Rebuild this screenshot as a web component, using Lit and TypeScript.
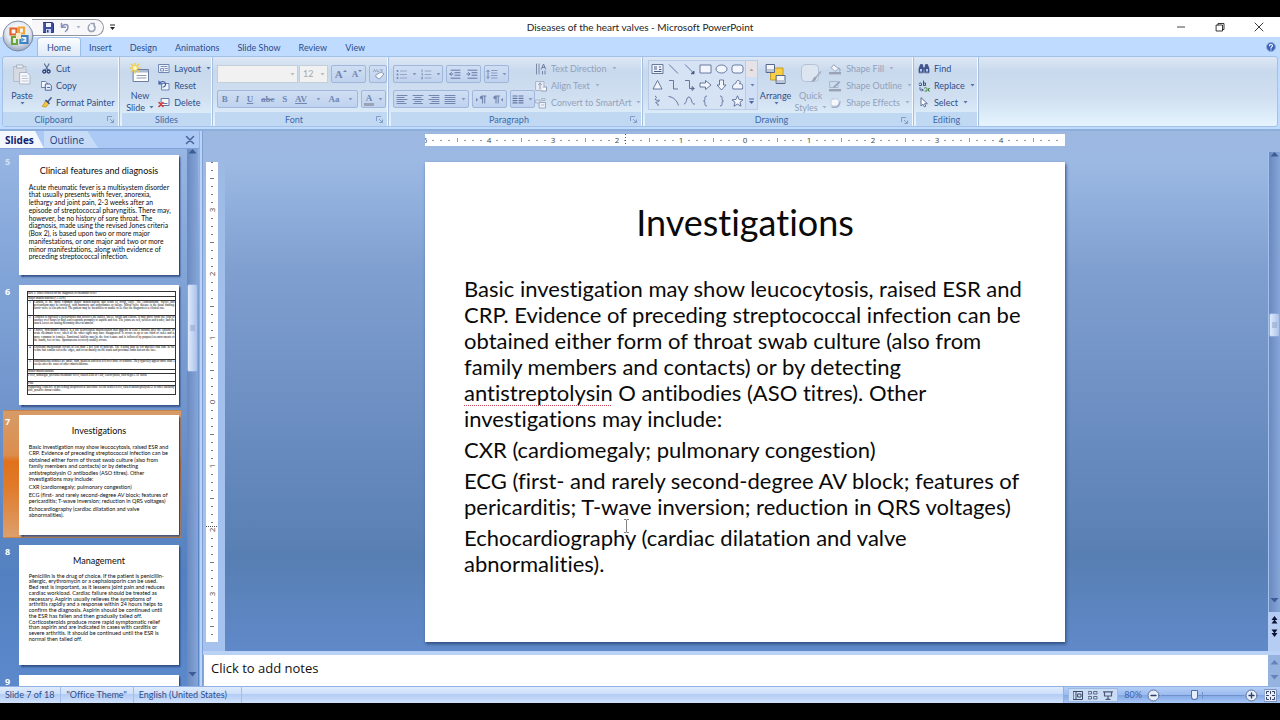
import { LitElement, html, css, svg, nothing } from "lit";
import { customElement, property } from "lit/decorators.js";
import { classMap } from "lit/directives/class-map.js";

interface SlideData {
  num: number;
  title?: string;
  size?: "normal" | "large" | "small";
  paras?: string[][];
  table?: boolean;
}

const SLIDES: SlideData[] = [
  {
    num: 5,
    title: "Clinical features and diagnosis",
    size: "large",
    paras: [[
      "Acute rheumatic fever is a multisystem disorder",
      "that usually presents with fever, anorexia,",
      "lethargy and joint pain, 2-3 weeks after an",
      "episode of streptococcal pharyngitis. There may,",
      "however, be no history of sore throat. The",
      "diagnosis, made using the revised Jones criteria",
      "(Box 2), is based upon two or more major",
      "manifestations, or one major and two or more",
      "minor manifestations, along with evidence of",
      "preceding streptococcal infection.",
    ]],
  },
  { num: 6, table: true },
  {
    num: 7,
    title: "Investigations",
    size: "normal",
    paras: [
      [
        "Basic investigation may show leucocytosis, raised ESR and",
        "CRP. Evidence of preceding streptococcal infection can be",
        "obtained either form of throat swab culture (also from",
        "family members and contacts) or by detecting",
        "antistreptolysin O antibodies (ASO titres). Other",
        "investigations may include:",
      ],
      ["CXR (cardiomegaly; pulmonary congestion)"],
      [
        "ECG (first- and rarely second-degree AV block; features of",
        "pericarditis; T-wave inversion; reduction in QRS voltages)",
      ],
      ["Echocardiography (cardiac dilatation and valve", "abnormalities)."],
    ],
  },
  {
    num: 8,
    title: "Management",
    size: "small",
    paras: [[
      "Penicillin is the drug of choice. If the patient is penicillin-",
      "allergic, erythromycin or a cephalosporin can be used.",
      "Bed rest is important, as it lessens joint pain and reduces",
      "cardiac workload. Cardiac failure should be treated as",
      "necessary. Aspirin usually relieves the symptoms of",
      "arthritis rapidly and a response within 24 hours helps to",
      "confirm the diagnosis. Aspirin should be continued until",
      "the ESR has fallen and then gradually tailed off.",
      "Corticosteroids produce more rapid symptomatic relief",
      "than aspirin and are indicated in cases with carditis or",
      "severe arthritis. It should be continued until the ESR is",
      "normal then tailed off.",
    ]],
  },
  { num: 9 },
];

const CRITERIA: { n?: number; h: number; text: string }[] = [
  { h: 15, text: "Box 2: Jones criteria for the diagnosis of rheumatic fever" },
  { h: 15, text: "Major manifestations (CCEPS)" },
  { n: 1, h: 60, text: "Carditis is the most common major manifestation and tends to occur early. The endocardium, valves and pericardium may be involved, with murmurs and arrhythmias or failure. Mitral valve disease is the usual finding; aortic valve is less affected. The patient may be breathless or unable to lie flat; the diagnosis is a clinical one." },
  { n: 2, h: 53, text: "Arthritis is typically a polyarthritis that involves the ankles, knees, wrists and elbows. It may move from one joint to another over hours or days and responds promptly to aspirin and rest. The joints are red, swollen and tender, and the attack leaves no lasting deformity after treatment." },
  { n: 3, h: 68, text: "Chorea, Sydenham's chorea, is a late neurological manifestation that appears at least 3 months after the episode of acute rheumatic fever, when all the other signs may have disappeared. It occurs in up to one third of cases and is more common in females. Emotional lability may be the first feature and is followed by purposeless movements of the hands, feet or face. Spontaneous recovery usually occurs." },
  { n: 4, h: 55, text: "Erythema marginatum occurs in less than 5 per cent of patients. The lesions start as red macules that fade in the centre but remain red at the edges, and occur mainly on the trunk and proximal limbs but not the face." },
  { n: 5, h: 40, text: "Subcutaneous nodules are small, firm, painless and best felt over bone or tendons. They typically appear more than 3 weeks after the onset of other manifestations." },
  { h: 15, text: "Minor manifestations" },
  { h: 30, text: "Fever, arthralgia, previous rheumatic fever, raised ESR or CRP, leucocytosis, first-degree AV block" },
  { h: 15, text: "Plus" },
  { h: 35, text: "Supporting evidence of preceding streptococcal infection: recent scarlet fever, raised antistreptolysin O or other antibody titre, positive throat culture." },
];

@customElement("ppt-slide")
class PptSlide extends LitElement {
  @property({ attribute: false }) slide!: SlideData;
  @property({ type: Boolean }) proofing = false;

  static styles = css`
    :host { display: block; width: 640px; height: 480px; box-sizing: border-box; background: #fff; color: #0a0a0a; font-family: Lato, "Open Sans", sans-serif; font-variant-ligatures: none; overflow: hidden; padding: 38px 39px 0; }
    :host([table]) { padding: 25px 12px 0 30px; }
    h2 { margin: 0 0 32px; font-size: 36px; line-height: 44px; font-weight: 400; text-align: center; }
    p { margin: 0 0 5px; font-size: 22px; line-height: 26px; white-space: nowrap; }
    .large { font-size: 27px; line-height: 31px; }
    .small { line-height: 23px; }
    .typo { text-decoration: underline dotted #c8485c 1px; text-underline-offset: 4px; text-decoration-skip-ink: none; }
    table { width: 100%; border-collapse: collapse; font: 12px/13px "Liberation Serif", serif; }
    td { border: 3px solid #333; padding: 0 2px; vertical-align: top; text-align: justify; color: #000; box-sizing: border-box; }
    .n { width: 24px; text-align: center; }
  `;

  line(t: string) {
    const w = "antistreptolysin";
    return this.proofing && t.startsWith(w) ? html`<span class="typo">${w}</span>${t.slice(w.length)}` : t;
  }

  render() {
    const s = this.slide;
    if (s.table) {
      return html`<table><tbody>${CRITERIA.map((r) => html`<tr style="height:${r.h}px">
        ${r.n ? html`<td class="n">${r.n}</td><td>${r.text}</td>` : html`<td colspan="2">${r.text}</td>`}</tr>`)}</tbody></table>`;
    }
    if (!s.title) return nothing;
    return html`<h2>${s.title}</h2>${s.paras!.map((p) => html`<p class=${s.size!}>${p.map((l, i) => html`${i ? html`<br>` : nothing}${this.line(l)}`)}</p>`)}`;
  }
}

const ic = (w: number, h: number, body: unknown) =>
  html`<svg width=${w} height=${h} viewBox="0 0 ${w} ${h}" fill="none" stroke-linecap="round" stroke-linejoin="round" aria-hidden="true">${body}</svg>`;

const I = {
  save: ic(11, 11, svg`<path d="M.5.5h9l1 1v9H.5z" fill="#3c4fa0" stroke="#2b3a80"/><path d="M3 1h5v4H3z" fill="#f4f6ff"/><path d="M3 7h5v4H3z" fill="#cfd6f4"/><path d="M4 8h1.500v2.500H4z" fill="#2b3a80"/>`),
  undo: ic(11, 11, svg`<path d="M2.500 1.500v3.800h3.800M2.800 5C4.500 1.500 9 1.500 9 5c0 2-1 3.500-2.500 4.500" stroke="#8791b8" stroke-width="1.500"/>`),
  redo: ic(11, 11, svg`<path d="M3.500 2.800C1 5 2 9.500 5.500 9.500S10 5.500 8 3M5 1.500h3.200v3" stroke="#9aa0b4" stroke-width="1.500"/>`),
  orb: ic(32, 32, svg`<defs><radialGradient id="o" cx=".5" cy=".35" r=".65"><stop offset="0" stop-color="#fff"/><stop offset=".6" stop-color="#e3e8f0"/><stop offset="1" stop-color="#93a2bd"/></radialGradient></defs>
    <circle cx="16" cy="16" r="15" fill="url(#o)" stroke="#7d8ba5"/>
    <g stroke-width="2.200" stroke-linejoin="miter"><path d="M8.500 8.500h6v6h-6z" stroke="#e2632a"/><path d="M17 7.500h5v6h-5z" stroke="#f0a43a"/><path d="M10 17h5v7h-5z" stroke="#6aa53c"/><path d="M18.500 16h7v7h-7z" stroke="#3f7fc4"/></g><path d="M14 13h5v6h-5z" fill="#f6e9c8"/><path d="M20 18l3 1.500-3 2z" fill="#4a9ad0"/>`),
  paste: ic(20, 22, svg`<path d="M2 3.500h12v15H2z" fill="#d5dae3" stroke="#b3bccb"/><path d="M5 2h6v3H5z" fill="#eceff4" stroke="#a7b0c0"/><path d="M8 9.500h7l3 3v8.500H8z" fill="#f6f8fb" stroke="#aab5c6"/><path d="M10 13h5M10 15.500h6M10 18h6" stroke="#bcc6d6"/>`),
  cut: ic(11, 11, svg`<path d="M3.500 1l3.500 6M8 1L4.500 7" stroke="#5a6f96" stroke-width="1.200"/><circle cx="3.300" cy="8.500" r="1.500" stroke="#26407c" stroke-width="1.300"/><circle cx="7.600" cy="8.500" r="1.500" stroke="#26407c" stroke-width="1.300"/>`),
  copy: ic(11, 11, svg`<path d="M.7 1.500h4l1.500 1.500v4.500H.7z" fill="#f4f8ff" stroke="#6a7fae"/><path d="M4.700 4h4l1.600 1.500v4.700H4.700z" fill="#e7effc" stroke="#4c649c"/><path d="M6.500 7.500h2" stroke="#4c649c"/>`),
  painter: ic(11, 11, svg`<path d="M10 1L6.500 5" stroke="#51648f" stroke-width="1.800"/><path d="M4.500 3.500l3.500 3-3 3.500c-1 0-2.500 0-4-1 2-1 2.500-3 3.500-5.500z" fill="#f5c542" stroke="#b58a22" stroke-width=".7"/><path d="M5 3.500l3 2.800" stroke="#2f4a85" stroke-width="1.500"/>`),
  newSlide: ic(22, 22, svg`<path d="M4.500 6.500h15v12h-15z" fill="#fdfefe" stroke="#6b7da0"/><path d="M5 7h14v2.500H5z" fill="#a9b9d4"/><path d="M8 12.500h9M8 15h9" stroke="#8c9ab3"/><path d="M6 0v10M1 5h10M2.300 1.300l7.400 7.400M9.700 1.300L2.300 8.700" stroke="#f2cf3c" stroke-width="1.400"/><circle cx="6" cy="5" r="2" fill="#fff7c4"/>`),
  layout: ic(12, 11, svg`<path d="M1 1.500h10v8H1z" fill="#eef4fc" stroke="#6f86b2"/><path d="M3 3.500h6M3 5.500h2.500v2.500H3zM7 5.500h2.500M7 7.500h2.500" stroke="#7f93b9"/>`),
  reset: ic(12, 11, svg`<path d="M4 3.500h7v6.500H4z" fill="#eef4fc" stroke="#6f86b2"/><path d="M1 1v3h3M1.500 3.500C3 .8 7 .8 7.500 3.500 8 6 6 7 5 7" stroke="#3e5ca4" stroke-width="1.200"/>`),
  del: ic(12, 11, svg`<path d="M3.500 1.500h7.500v7H3.500z" fill="#f4f7fd" stroke="#6478a4"/><path d="M5.500 6.500h3.500" stroke="#6478a4"/><path d="M1 5.500l4 4M5 5.500l-4 4" stroke="#d23a34" stroke-width="1.600"/>`),
  eraser: ic(13, 12, svg`<path d="M1.500 3.500l1-2 1 2M5 1.500v2h1.500M8 2h1.500M10 1.500v2" stroke="#8b99bb" stroke-width=".8"/><path d="M4 7l5-3 3 2-4.500 5L4.500 9.500z" fill="#f5f7fb" stroke="#8b99bb"/>`),
  lines: (ws: number[], x = 1) => ic(12, 11, ws.map((w, i) => svg`<path d="M${x === 1 ? 1 : x === 2 ? 6 - w / 2 : 11 - w} ${1.5 + i * 2}h${w}" stroke="#7286b0" stroke-width="1.100"/>`)),
  bullets: ic(12, 11, svg`<path d="M4.500 2h6M4.500 5.500h6M4.500 9h6" stroke="#94a5c8"/><path d="M1.500 2h.1M1.500 5.500h.1M1.500 9h.1" stroke="#7286b0" stroke-width="1.800"/>`),
  numbers: ic(12, 11, svg`<path d="M5 2h6M5 5.500h6M5 9h6" stroke="#94a5c8"/><path d="M2 .8v2M1.500 4.800h1v1.400M1.500 8.200h1v1.600h-1" stroke="#7286b0" stroke-width=".8"/>`),
  indent: (r: boolean) => ic(12, 11, svg`<path d="M2 1.200h9M6 3.700h5M6 6.200h5M2 9.200h9" stroke="#6579a5"/><path d=${r ? "M.8 5h3M2.500 3.500L4 5 2.500 6.500" : "M4 5H.8M2.300 3.500L.8 5l1.500 1.500"} stroke="#6579a5"/>`),
  spacing: ic(12, 11, svg`<path d="M5.500 1.500h5.500M5.500 4h5.500M5.500 6.500h5.500M5.500 9h5.500" stroke="#8a9cc2"/><path d="M2 1.200v8M.7 2.700L2 1.200l1.300 1.500M.7 7.900L2 9.300l1.300-1.400" stroke="#7286b0" stroke-width=".9"/>`),
  para: (l: boolean) => ic(12, 11, svg`<path d=${l ? "M1 4l2.200 1.800L1 7.600z" : "M11 4L8.800 5.800 11 7.600z"} fill="#7286b0"/><g stroke="#7286b0" stroke-width="1.100"><path d=${l ? "M7.500 2v7M9.700 2v7M11 2H7" : "M4 2v7M6.200 2v7M7.500 2H3.500"}/></g><circle cx=${l ? 6.5 : 3} cy="3.500" r="1.700" fill="#7286b0"/>`),
  cols: ic(12, 11, svg`<path d="M1 2h4M1 4.300h4M1 6.600h4M1 8.900h4M7 2h4M7 4.300h4M7 6.600h4M7 8.900h4" stroke="#6579a5" stroke-width="1.200"/>`),
  textDir: ic(12, 12, svg`<path d="M1.500 1v10M4 1v10" stroke="#7c8aa8"/><path d="M6.500 6L8.500 1l2 5M7.200 4.300h2.600M7.500 8.500v2.500M10 8v3" stroke="#6f7f9f"/>`),
  alignText: ic(12, 12, svg`<path d="M1 1.500h8v9H1z" fill="#e8edf5" stroke="#a9b5ca"/><path d="M5 3v6M3.500 4.500L5 3l1.500 1.500" stroke="#8c9ab5"/><path d="M9 7h2.500v4H7" fill="#fff" stroke="#8c9ab5"/>`),
  smart: ic(12, 12, svg`<path d="M1 3h4v3H1z" fill="#dfe6f2" stroke="#a9b5ca"/><path d="M4.500 5.500h6v5.500h-6z" fill="#f2f5fa" stroke="#9aa8c2"/><path d="M7 1.500h3v2H7zM6.500 8h2.500" stroke="#a9b5ca"/>`),
  arrange: ic(22, 22, svg`<path d="M6 5h12v12H6z" fill="#f8cf45" stroke="#c89a25"/><path d="M1.500 1.500h8v8h-8z" fill="#f3f5f9" stroke="#57678c"/><path d="M2 6h7v3H2z" fill="#bcc6d8"/><path d="M11.500 12.500h8.500v8h-8.500z" fill="#f3f5f9" stroke="#57678c"/><path d="M12 17h7.500v3H12z" fill="#bcc6d8"/>`),
  quick: ic(22, 22, svg`<rect x="1.500" y="1.500" width="17" height="17" rx="4" fill="#dde5f1" stroke="#b3c1d9"/><path d="M20.500 9l-5 6" stroke="#a7b2c6" stroke-width="1.800"/><path d="M15 13.500l1.500 1.500c-1 3-3 4-6 4 2-1 2.500-4 4.500-5.500z" fill="#98a4ba"/>`),
  fill: ic(14, 12, svg`<path d="M6 2l4.500 3.500L7 8.500 3.500 5z" fill="#f1f4f9" stroke="#99a5bd"/><path d="M11 5c1 1.500 1.500 2 .8 3" stroke="#8292b5"/><path d="M1 10.200h12" stroke="#99a3b5" stroke-width="2.400" stroke-linecap="butt"/>`),
  outline: ic(14, 12, svg`<path d="M2 1.500h8v6H2z" stroke="#aab6cc"/><path d="M11.500 2L6 7" stroke="#8d9ab3" stroke-width="1.400"/><path d="M1 10.200h12" stroke="#99a3b5" stroke-width="2.400" stroke-linecap="butt"/>`),
  effects: ic(14, 12, svg`<rect x="3" y="2" width="8" height="7" rx="2" fill="#f6f8fc" stroke="#c2cde0"/><path d="M4 10c4 1 7 0 8-5" stroke="#a0aec9" stroke-width="1.500"/>`),
  find: ic(12, 11, svg`<path d="M1 9.500V5.500L2.500 1.500h2l.8 4v4zM6.700 9.500v-4l.8-4h2L11 5.500v4z" fill="#41568f" stroke="#2c4078" stroke-width=".6"/><path d="M5 4.500h2v2H5z" fill="#41568f"/><path d="M2 6h2v2.500H2zM8 6h2v2.500H8z" fill="#b9c8ea"/>`),
  replace: ic(12, 12, svg`<path d="M1 4c0-1.500 2.500-1.500 2.500 0v1.500H1.500M5.500 1v4.500h2V3h-2" stroke="#3a4f88"/><path d="M2 7.500v2.500h3M4 9l1.200 1L4 11" stroke="#3a4f88" stroke-width=".8"/><path d="M6.500 8c2-1 2.500 0 2.500 1v2H7M11.500 8.500h-1v2.500h1" stroke="#468a44"/>`),
  select: ic(12, 11, svg`<path d="M3 1v8l2-1.800L6.500 10l1.300-.8L6.500 6.700H9z" fill="#fff" stroke="#5f7099"/>`),
};

const arrow = html`<svg class="arr" width="5" height="3" viewBox="0 0 5 3" aria-hidden="true"><path d="M.5 0h4L2.500 2.500z" fill="currentColor"/></svg>`;

const SHAPES = [
  svg`<path d="M1 1.500h11v9H1z" fill="#eef3fb"/><path d="M3 4h3M3 6h3M8 4h2M8 6.500h2.500M3 8.500h7.500" stroke-width="1.200"/>`,
  svg`<path d="M2 1.500l9 9"/>`, svg`<path d="M2 1.500l9 9M8 10.800h3V8z" fill="#33456f"/>`,
  svg`<path d="M1 2h11v8H1z" fill="#f2f6fc"/>`, svg`<ellipse cx="6.500" cy="6" rx="5.500" ry="4" fill="#f2f6fc"/>`,
  svg`<rect x="1" y="2" width="11" height="8" rx="2.500" fill="#f2f6fc"/>`,
  svg`<path d="M6.500 1.500l4.500 8.500H2z" fill="#f2f6fc"/>`, svg`<path d="M2 1.500h4.500v8.500H11"/>`,
  svg`<path d="M2 1.500h4.500v8H11M9 7.500l2.500 2L9 11.500z"/>`,
  svg`<path d="M1 4h5.500V1.500L12 6l-5.500 4.500V8H1z" fill="#f2f6fc"/>`,
  svg`<path d="M4.500 1h4v5H11L6.500 11 2 6h2.500z" fill="#f2f6fc"/>`,
  svg`<path d="M2 10C0 5 5 5 5 4c0-4 6-3 3.500 1C11 4 12 6 11.500 10z" fill="#f2f6fc"/>`,
  svg`<path d="M4 1c4 2-2 3 1 4s4-1 3 1-4 0-3 2 3 0 2 3"/>`, svg`<path d="M1.500 1.500C7 2 10 6 11.500 10.500"/>`,
  svg`<path d="M1 9C4 9 3 1.500 6 2s2 8 6 7"/>`, svg`<path d="M8 1C4 1 7.500 6 4.500 6 7.500 6 4 11 8 11"/>`,
  svg`<path d="M5 1c4 0 .5 5 3.500 5C5.500 6 9 11 5 11"/>`,
  svg`<path d="M6.500.8l1.600 3.700 3.900.3-3 2.500 1 3.900-3.500-2.100L3 11.200l1-3.900-3-2.500 3.900-.3z" fill="#f2f6fc"/>`,
];

@customElement("app-root")
class AppRoot extends LitElement {
  static styles = css`
    :host { display: grid; grid-template-rows: 20px 19px 75px minmax(0, 1fr) 17px; height: 100vh; box-sizing: border-box; padding: 17px 0; background: #000; font: 9px/12px Lato, "Open Sans", sans-serif; font-variant-ligatures: none; color: #2f4d8a; overflow: hidden; }
    button, select, textarea, input { font: inherit; color: inherit; margin: 0; }
    button { border: 0; padding: 0; background: none; display: flex; align-items: center; }
    svg { display: block; flex: none; }

    .title { position: relative; background: #fff; display: grid; grid-template-columns: 1fr auto 1fr; align-items: center; }
    .title h1 { margin: 0; font-size: 10px; font-weight: 400; color: #222; line-height: 20px; }
    .orb { position: absolute; left: 2px; top: 3px; z-index: 2; }
    .left { display: flex; align-items: center; gap: 6px; }
    .qat { display: flex; align-items: center; gap: 5px; height: 17px; margin-left: 32px; padding: 0 6px 0 11px; border: 1px solid #8f949d; border-left: 0; border-radius: 0 9px 9px 0; background: #f8f8fa; box-sizing: border-box; }
    .wins { justify-self: end; display: flex; gap: 29px; padding-right: 16px; }

    .tabs { background: #bfdbff; display: flex; padding: 1px 4px 0 38px; position: relative; }
    .tabs button { padding: 1px 9px 0; }
    .tabs .on { background: linear-gradient(#fbfdff, #dfe9f7); border-radius: 3px 3px 0 0; box-shadow: 0 0 0 1px #9dbce6; clip-path: inset(-2px -2px 0 -2px); }
    .help { margin-left: auto; align-self: center; }
    .tabs .help { padding: 0; }

    .ribbon { background: #bfdbff; padding: 0 2px 2px; box-sizing: border-box; border-bottom: 2px solid #8daedb; display: flex; }
    .band { flex: 1; display: flex; gap: 3px; background: linear-gradient(#dee8f5, #c9d9ed 20%, #d0e0f1 60%, #e5f4fe); border: 1px solid #a3c1e8; border-radius: 3px; box-sizing: border-box; }
    .group { display: flex; flex-direction: column; box-sizing: border-box; border-right: 1px solid #f4f9ff; box-shadow: 1px 0 0 #a5bfe0; }
    .body { flex: 1; display: flex; padding-top: 3px; }
    .cap { height: 14px; background: #c0d8f2; color: #3e6aaa; display: flex; align-items: center; justify-content: center; position: relative; padding-top: 1px; box-sizing: border-box; }
    .launch { padding-right: 14px; }
    .cap svg { position: absolute; right: 4px; top: 4px; }
    .g-clip { width: 116px; } .g-slides { width: 90px; } .g-font { width: 173px; } .g-para { width: 251px; } .g-draw { width: 268px; } .g-edit { width: 62px; }
    .big { flex-direction: column; width: 38px; padding-top: 3px; line-height: 11px; gap: 1px; color: inherit; }
    .big > svg:first-child { margin-bottom: 4px; }
    .big span { display: flex; align-items: center; gap: 3px; }
    .col { display: flex; flex-direction: column; }
    .col button { height: 17px; gap: 4px; white-space: nowrap; }
    .g-edit .col { padding-left: 2px; }
    .off, .off button { color: #93a1b9; }
    .arr { margin-left: 1px; opacity: .75; }
    .rows { display: flex; flex-direction: column; padding: 5px 0 0 2px; gap: 7px; }
    .row { display: flex; gap: 3px; height: 18px; }
    .set { display: flex; align-items: center; justify-content: space-around; border: 1px solid #a0b7db; border-radius: 2px; background: linear-gradient(#cfdef3, #bfd2ee); box-sizing: border-box; color: #7286b0; font: bold 9px/12px "Liberation Serif", serif; }
    .s18 { width: 18px; } .s25 { width: 25px; } .s35 { width: 35px; } .s50 { width: 50px; } .s76 { width: 76px; } .s140 { width: 141px; }
    .it { font-style: italic; } .un { text-decoration: underline; } .st { text-decoration: line-through; }
    .bar { border-bottom: 3px solid #99a3b5; line-height: 10px; padding: 0 2px; }
    .lg { font-size: 11px; }
    .combo { display: flex; gap: 1px; }
    select { appearance: none; background: #f1f1f1; border: 1px solid #c5cedb; border-radius: 0; color: #a5a8ae; padding: 0 3px; opacity: 1; height: 18px; box-sizing: border-box; }
    .pick { display: flex; align-items: center; position: relative; color: #a5a8ae; }
    .pick .arr { position: absolute; right: 3px; top: 8px; }
    .fname { width: 81px; } .fsize { width: 29px; }

    .gallery { display: flex; margin-left: 3px; height: 50px; box-sizing: border-box; border: 1px solid #b9cce6; background: #d5e3f5; }
    .shapes { display: grid; grid-template-columns: repeat(6, 16px); grid-auto-rows: 16px; }
    .shapes button { justify-content: center; }
    .spin { display: grid; grid-template-rows: repeat(3, 1fr); border-left: 1px solid #b9cce6; width: 11px; color: #4b64a0; }
    .spin button { justify-content: center; background: #d0dff5; }
    .spin .dim { background: #e6e3e8; color: #b59ca0; }

    .work { display: grid; grid-template-columns: 199px 4px minmax(0, 1fr); min-height: 0; }
    .panel { display: grid; grid-template-rows: 18px minmax(0, 1fr); background: linear-gradient(#9ab8e5, #86a8da 20%, #7094cc 50%, #5380c0 80%, #5c89cb); min-height: 0; }
    .ptabs { background: #abc9f4; display: flex; align-items: stretch; border-bottom: 1px solid #7fa2d8; font: 10px/14px "Open Sans", sans-serif; color: #1d3c7c; padding-right: 4px; }
    .ptabs .t { padding: 0 10px 0 5px; clip-path: polygon(0 0, 80% 0, 100% 100%, 0 100%); }
    .ptabs .on { background: #f3f8ff; font-weight: 700; color: #10206e; }
    .ptabs .o2 { padding: 0 14px 0 6px; background: #c6dbf8; }
    .ptabs .x { margin-left: auto; }
    .list { display: grid; grid-template-columns: minmax(0, 1fr) 12px; min-height: 0; }
    ol { list-style: none; margin: 0; padding: 1px 6px 0 3px; overflow: hidden; }
    li { display: flex; padding: 4px 2px; margin-bottom: 2px; border: 1px solid transparent; border-width: 1px 0; box-sizing: border-box; height: 128px; }
    li span { width: 14px; font: bold 9px/14px "Open Sans", sans-serif; color: #fff; }
    li .dimnum { opacity: .6; }
    li.sel { background: linear-gradient(#d79b68, #dc8d4d 35%, #e0711a 40%, #e07a2a 60%, #dd9f6c); border-color: #c88345; }
    .thumb { zoom: .25; box-shadow: 6px 8px 6px #2d4a80; }
    .track { background: linear-gradient(90deg, #6a89bf, #86a5d8); display: grid; margin-right: 1px; color: #3b5c97; justify-items: center; box-sizing: border-box; }
    .t1 { grid-template-rows: 12px 123px 88px 1fr 14px; padding-top: 0; }
    .grip { background: linear-gradient(90deg, #dfeafb, #a9c2ea); border: 1px solid #8ba9da; border-radius: 2px; box-sizing: border-box; justify-self: stretch; display: flex; align-items: center; justify-content: center; }
    .split { background: linear-gradient(90deg, #8fb0e4 1px, #b9d3fa 1px 3px, #7f9fd2 3px); }

    .edit { display: grid; grid-template-rows: minmax(0, 1fr) 4px 31px; min-height: 0; }
    .view { display: grid; grid-template-columns: 22px minmax(0, 1fr) 12px; min-height: 0; background: linear-gradient(#9cb8e1, #9cb9e3 6%, #7f9fd0 27%, #7192c5 48%, #587fb3 82%, #6089c9); }
    .vr { padding: 31px 0 0 3px; background: linear-gradient(#9cb8e1, #a2bfeb 30%, #a6c2ee); }
    .stage { display: flex; flex-direction: column; align-items: center; padding: 3px 3px 0 0; overflow: hidden; }
    .page { position: relative; margin-top: 16px; box-shadow: 1px 2px 3px #2f4d80; }
    .ibeam { position: absolute; left: 198px; top: 357px; }
    .ruler { background: #fff; overflow: hidden; }
    .ruler text { font: 8px "Open Sans", sans-serif; fill: #444; text-anchor: middle; }
    .right { display: grid; grid-template-rows: 460px 1fr; padding-top: 21px; }
    .t2 { margin: 0; grid-template-rows: 14px 147px 24px 1fr 14px; border-left: 1px solid #a5c2ef; }
    .jumps { background: #b5cdf3; display: flex; flex-direction: column; align-items: center; padding-top: 4px; gap: 5px; color: #0b1330; }
    .hs { background: #bad2f6; }
    .notes { display: grid; grid-template-columns: minmax(0, 1fr) 12px; }
    textarea { border: 0; border-left: 1px solid #8aa6d4; resize: none; overflow: hidden; outline: 0; background: #fff; font: 13px/18px "Open Sans", sans-serif; padding: 4px 7px 0; box-sizing: border-box; height: 31px; display: block; width: 100%; }
    textarea::placeholder { color: #111; opacity: 1; }
    .t3 { margin: 0; grid-template-rows: 14px 1fr; align-items: center; background: #96b2df; color: #6483ba; }

    .status { background: linear-gradient(#8fb0e0 1px, #dfebfd 1px, #cddff9 45%, #b4cdf5 50%, #cfe1fb); display: flex; align-items: stretch; padding-left: 5px; }
    .status > span { display: flex; align-items: center; padding-right: 6px; margin-right: 5px; border-right: 1px solid #a3bee6; }
    .status .lang { padding-right: 14px; }
    .zoom { margin-left: auto; display: flex; align-items: center; padding: 1px 3px 0 4px; border-left: 1px solid #8fb0e0; background: linear-gradient(#8fb0e0 1px, #b5cff6 1px, #9cbcf0 50%, #83a8e6 55%, #a8c6f5); }
    .views { display: flex; gap: 5px; padding: 2px 4px; background: #cbdcf5; border: 1px solid #9db9e4; height: 14px; box-sizing: border-box; align-items: center; }
    .pct { padding: 0 5px 0 6px; color: #3f63ab; }
    input[type="range"] { appearance: none; width: 83px; height: 12px; background: linear-gradient(#6f92cc, #6f92cc) center / 100% 1px no-repeat, linear-gradient(#6f92cc, #6f92cc) center / 1px 7px no-repeat; margin: 0 1px; }
    input[type="range"]::-webkit-slider-thumb { appearance: none; width: 7px; height: 10px; background: #e6effc; border: 1px solid #4d6fae; border-radius: 1px 1px 4px 4px; }
    .fit { margin-left: 6px; }
  `;

  group(cls: string, cap: string, body: unknown, launch = true) {
    return html`<section class="group ${cls}"><div class="body">${body}</div><div class=${classMap({ cap: true, launch })}>${cap}${launch
      ? html`<svg width="7" height="7" viewBox="0 0 7 7" aria-hidden="true"><path d="M.5 5V.5H5M3 3l3 3M6.500 3.500v3h-3" fill="none" stroke="#7f9dc9"/></svg>` : nothing}</div></section>`;
  }

  cmd(icon: unknown, text: string, drop = false) {
    return html`<button>${icon}${text}${drop ? arrow : nothing}</button>`;
  }

  ruler(vertical: boolean) {
    const len = vertical ? 480 : 640;
    const mid = len / 2;
    const marks = [];
    for (let p = mid % 8; p < len; p += 8) {
      const d = Math.abs(p - mid);
      if (d % 64 === 0) {
        const n = d / 64;
        marks.push(vertical
          ? svg`<text transform="translate(9 ${p}) rotate(-90)">${n}</text>`
          : svg`<text x=${p} y="9">${n}</text>`);
      } else {
        const h = d % 32 === 0 ? 4 : 2;
        marks.push(vertical
          ? svg`<path d="M${6 - h / 2} ${p + 0.5}h${h}" stroke="#777"/>`
          : d % 32 === 0
            ? svg`<path d="M${p + 0.5} 4v4" stroke="#999"/>`
            : svg`<path d="M${p - 1} 6.500h2" stroke="#999"/>`);
      }
    }
    const cursor = vertical ? svg`<path d="M0 364.500h12" stroke="#555" stroke-dasharray="1 1"/>` : svg`<path d="M200.500 0v12" stroke="#555" stroke-dasharray="1 2"/>`;
    return vertical
      ? html`<svg class="ruler" width="12" height="480" aria-hidden="true">${marks}${cursor}</svg>`
      : html`<svg class="ruler" width="640" height="12" aria-hidden="true">${marks}${cursor}</svg>`;
  }

  tri(up: boolean) {
    return html`<svg width="9" height="5" viewBox="0 0 9 5" aria-hidden="true"><path d=${up ? "M4.500 0L8.500 4.500h-8z" : "M4.500 4.500L.5 0h8z"} fill="currentColor"/></svg>`;
  }

  jump(up: boolean) {
    return html`<svg width="7" height="8" viewBox="0 0 7 8" aria-hidden="true"><path d=${up ? "M3.500 0L6.500 4h-6zM3.500 3.500l3 4h-6z" : "M3.500 4.500L.5.5h6zM3.500 8L.5 4h6z"} fill="currentColor"/></svg>`;
  }

  render() {
    const grip = ic(5, 6, svg`<path d="M0 1h5M0 3h5M0 5h5" stroke="#7d94bd" stroke-width=".8"/>`);
    return html`
      <header class="title">
        <button class="orb" aria-label="Office Button">${I.orb}</button>
        <div class="left">
          <div class="qat"><button aria-label="Save">${I.save}</button><button aria-label="Undo">${I.undo}</button><span class="off">${arrow}</span><button aria-label="Redo">${I.redo}</button></div>
          <button aria-label="Customize toolbar">${ic(5, 7, svg`<path d="M0 1h5" stroke="#222"/><path d="M0 3h5L2.500 6z" fill="#222"/>`)}</button>
        </div>
        <h1>Diseases of the heart valves - Microsoft PowerPoint</h1>
        <div class="wins">
          <button aria-label="Minimize">${ic(10, 10, svg`<path d="M1 5h8" stroke="#444" stroke-linecap="butt"/>`)}</button>
          <button aria-label="Restore">${ic(10, 10, svg`<path d="M1.500 3h6v6h-6zM3 3V1.500h6V7.500H7.500" stroke="#222" stroke-width=".9"/>`)}</button>
          <button aria-label="Close">${ic(10, 10, svg`<path d="M1 1l8 8M9 1L1 9" stroke="#222" stroke-width=".9"/>`)}</button>
        </div>
      </header>
      <nav class="tabs">
        ${["Home", "Insert", "Design", "Animations", "Slide Show", "Review", "View"].map((t, i) => html`<button class=${classMap({ on: i === 0 })}>${t}</button>`)}
        <button class="help" aria-label="Help">${ic(10, 10, svg`<circle cx="5" cy="5" r="4.500" fill="#3b62b8" stroke="#8fa8dc"/><path d="M3.500 3.800C3.500 2 6.500 2 6.500 3.800 6.500 5 5 4.800 5 6.200M5 7.800v.1" stroke="#fff" stroke-width="1.100"/>`)}</button>
      </nav>
      <div class="ribbon"><div class="band">
        ${this.group("g-clip", "Clipboard", html`
          <button class="big">${I.paste}Paste${arrow}</button>
          <div class="col">${this.cmd(I.cut, "Cut")}${this.cmd(I.copy, "Copy")}${this.cmd(I.painter, "Format Painter")}</div>`)}
        ${this.group("g-slides", "Slides", html`
          <button class="big">${I.newSlide}New<span>Slide ${arrow}</span></button>
          <div class="col">${this.cmd(I.layout, "Layout", true)}${this.cmd(I.reset, "Reset")}${this.cmd(I.del, "Delete")}</div>`, false)}
        ${this.group("g-font", "Font", html`<div class="rows">
          <div class="row">
            <div class="combo"><label class="pick"><select class="fname" aria-label="Font" disabled><option></option></select>${arrow}</label><label class="pick"><select class="fsize" aria-label="Font size" disabled><option>12</option></select>${arrow}</label></div>
            <div class="set s35"><button class="lg">A${ic(4, 8, svg`<path d="M0 2h4L2 0z" fill="#7286b0"/>`)}</button><button>A${ic(4, 8, svg`<path d="M0 0h4L2 2z" fill="#7286b0"/>`)}</button></div>
            <div class="set s18"><button aria-label="Clear formatting">${I.eraser}</button></div>
          </div>
          <div class="row">
            <div class="set s140"><button>B</button><button class="it">I</button><button class="un">U</button><button class="st">abc</button><button>S</button><button class="un">AV</button>${arrow}<button>Aa</button>${arrow}</div>
            <div class="set s25"><button class="bar">A</button>${arrow}</div>
          </div></div>`)}
        ${this.group("g-para", "Paragraph", html`<div class="rows">
            <div class="row"><div class="set s50"><button aria-label="Bullets">${I.bullets}</button>${arrow}<button aria-label="Numbering">${I.numbers}</button>${arrow}</div>
              <div class="set s35"><button aria-label="Decrease indent">${I.indent(false)}</button><button aria-label="Increase indent">${I.indent(true)}</button></div>
              <div class="set s25"><button aria-label="Line spacing">${I.spacing}</button>${arrow}</div></div>
            <div class="row"><div class="set s76"><button aria-label="Left">${I.lines([10, 7, 10, 7, 9])}</button><button aria-label="Center">${I.lines([10, 6, 10, 6, 9], 2)}</button><button aria-label="Right">${I.lines([10, 7, 10, 7, 9], 3)}</button><button aria-label="Justify">${I.lines([10, 10, 10, 10, 10])}</button>${arrow}</div>
              <div class="set s35"><button aria-label="Left to right">${I.para(true)}</button><button aria-label="Right to left">${I.para(false)}</button></div>
              <div class="set s25"><button aria-label="Columns">${I.cols}</button>${arrow}</div></div>
          </div>
          <div class="col off">${this.cmd(I.textDir, "Text Direction", true)}${this.cmd(I.alignText, "Align Text", true)}${this.cmd(I.smart, "Convert to SmartArt", true)}</div>`)}
        ${this.group("g-draw", "Drawing", html`
          <div class="gallery"><div class="shapes">${SHAPES.map((s) => html`<button aria-label="Shape"><svg width="13" height="12" viewBox="0 0 13 12" fill="none" stroke="#4a5c88" stroke-width=".8">${s}</svg></button>`)}</div>
            <div class="spin"><button class="dim" aria-label="Up"><svg width="5" height="3"><path d="M.5 3h4L2.500.5z" fill="currentColor"/></svg></button><button aria-label="Down">${arrow}</button><button aria-label="More">${ic(5, 6, svg`<path d="M0 1h5" stroke="#4b64a0"/><path d="M0 3h5L2.500 6z" fill="#4b64a0"/>`)}</button></div></div>
          <button class="big">${I.arrange}Arrange${arrow}</button>
          <button class="big off">${I.quick}Quick<span>Styles ${arrow}</span></button>
          <div class="col off">${this.cmd(I.fill, "Shape Fill", true)}${this.cmd(I.outline, "Shape Outline", true)}${this.cmd(I.effects, "Shape Effects", true)}</div>`)}
        ${this.group("g-edit", "Editing", html`<div class="col">${this.cmd(I.find, "Find")}${this.cmd(I.replace, "Replace", true)}${this.cmd(I.select, "Select", true)}</div>`, false)}
      </div></div>
      <main class="work">
        <aside class="panel">
          <div class="ptabs"><button class="t on">Slides</button><button class="t o2">Outline</button><button class="x" aria-label="Close pane">${ic(10, 10, svg`<path d="M1.500 1.500l7 7M8.500 1.500l-7 7" stroke="#4a6398" stroke-width="1.500"/>`)}</button></div>
          <div class="list">
            <ol>${SLIDES.map((s) => html`<li class=${classMap({ sel: s.num === 7 })}><span class=${classMap({ dimnum: s.num === 5 })}>${s.num}</span><ppt-slide class="thumb" .slide=${s} ?table=${!!s.table}></ppt-slide></li>`)}</ol>
            <div class="track t1">${this.tri(true)}<i></i><div class="grip">${grip}</div><i></i>${this.tri(false)}</div>
          </div>
        </aside>
        <div class="split"></div>
        <section class="edit">
          <div class="view">
            <div class="vr">${this.ruler(true)}</div>
            <div class="stage">${this.ruler(false)}
              <div class="page"><ppt-slide .slide=${SLIDES[2]} proofing></ppt-slide>
                <svg class="ibeam" width="7" height="14" viewBox="0 0 7 14" fill="none" stroke="#777" aria-hidden="true"><path d="M1 .5h2l.5 1 .5-1h2M3.500 1v12M1 13.500h2l.5-1 .5 1h2" stroke-width=".9"/></svg></div>
            </div>
            <div class="right"><div class="track t2">${this.tri(true)}<i></i><div class="grip">${grip}</div><i></i>${this.tri(false)}</div>
              <div class="jumps">${this.jump(true)}${this.jump(false)}</div></div>
          </div>
          <div class="hs"></div>
          <div class="notes"><textarea aria-label="Notes" placeholder="Click to add notes"></textarea><div class="track t3">${this.tri(true)}${this.tri(false)}</div></div>
        </section>
      </main>
      <footer class="status"><span>Slide 7 of 18</span><span>"Office Theme"</span><span class="lang">English (United States)</span>
        <div class="zoom"><div class="views">
            <button aria-label="Normal">${ic(10, 9, svg`<path d="M.5.500h9v8h-9zM3 .5v8M5 3h3v3H5z" stroke="#3e4a68"/>`)}</button>
            <button aria-label="Sorter">${ic(10, 9, svg`<path d="M.5.500h3v2.500h-3zM6 .5h3v2.500H6zM.5 5.500h3V8h-3zM6 5.500h3V8H6z" stroke="#5f6b88"/>`)}</button>
            <button aria-label="Slide show">${ic(10, 9, svg`<path d="M.5.800h9M1.500 1v4h7V1M5 5v3M3 8.300h4" stroke="#4c5876" stroke-width="1.200"/>`)}</button></div>
          <span class="pct">80%</span>
          <button aria-label="Zoom out">${ic(13, 13, svg`<circle cx="6.500" cy="6.500" r="5.500" fill="#e4edfa" stroke="#5d7198"/><path d="M4 6.500h5" stroke="#2e3f66" stroke-width="1.300"/>`)}</button>
          <input type="range" min="10" max="190" value="80" aria-label="Zoom">
          <button aria-label="Zoom in">${ic(13, 13, svg`<circle cx="6.500" cy="6.500" r="5.500" fill="#e4edfa" stroke="#5d7198"/><path d="M4 6.500h5M6.500 4v5" stroke="#2e3f66" stroke-width="1.300"/>`)}</button>
          <button class="fit" aria-label="Fit slide">${ic(13, 13, svg`<path d="M.5.500h12v12H.5z" fill="#e6eefb" stroke="#7f94bd"/><path d="M2.500 4.500v-2h2M8.500 2.500h2v2M2.500 8.500v2h2M10.500 8.500v2h-2M6.500 2.500v2M6.500 8.500v2M2.500 6.500h2M8.500 6.500h2" stroke="#33415f"/>`)}</button>
        </div>
      </footer>`;
  }
}
